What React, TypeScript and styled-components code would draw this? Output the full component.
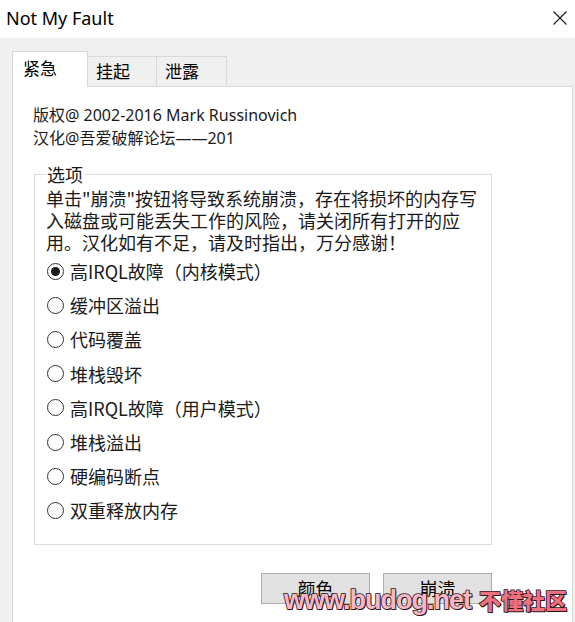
import React, { useState } from "react";
import styled, { createGlobalStyle } from "styled-components";

const GlobalStyle = createGlobalStyle`
  html, body {
    margin: 0;
    padding: 0;
    background: #f0f0f0;
  }
  * { box-sizing: border-box; }
`;

const UI_FONT = `"Noto Sans", "Noto Sans CJK SC", sans-serif`;
const CJK_FONT = `"Noto Sans CJK SC", "Noto Sans", sans-serif`;

const Window = styled.div`
  position: relative;
  width: 575px;
  height: 622px;
  display: flex;
  flex-direction: column;
  overflow: hidden;
  color: #1a1a1a;
  font-family: ${CJK_FONT};
`;

const TitleBar = styled.div`
  height: 38px;
  background: #ffffff;
  display: flex;
  align-items: center;
  justify-content: space-between;
  padding: 0 4px 2px 6px;
`;

const Title = styled.span`
  font-family: ${UI_FONT};
  font-size: 18px;
  color: #000;
`;

const CloseBtn = styled.button`
  border: none;
  background: transparent;
  width: 22px;
  height: 22px;
  padding: 0;
  display: flex;
  align-items: center;
  justify-content: center;
`;

const Body = styled.div`
  flex: 1;
  background: #f0f0f0;
  padding: 14px 2px 0 12px;
  display: flex;
  flex-direction: column;
`;

const TabStrip = styled.div`
  display: flex;
  align-items: flex-end;
  height: 35px;
  position: relative;
  z-index: 1;
  margin-bottom: -1px;
`;

const Tab = styled.div<{ $active?: boolean; $width: number }>`
  width: ${({ $width }) => $width}px;
  height: ${({ $active }) => ($active ? "36px" : "31px")};
  background: ${({ $active }) => ($active ? "#ffffff" : "#f0f0f0")};
  border: 1px solid #d9d9d9;
  border-bottom: ${({ $active }) => ($active ? "none" : "1px solid #d9d9d9")};
  margin-left: ${({ $active }) => ($active ? "0" : "-1px")};
  font-size: 17px;
  padding-left: ${({ $active }) => ($active ? "10px" : "8px")};
  padding-top: ${({ $active }) => ($active ? "3px" : "1px")};
  line-height: 26px;
  color: #000;
  cursor: default;
`;

const Panel = styled.div`
  flex: 1;
  background: #ffffff;
  border: 1px solid #d9d9d9;
  border-bottom: none;
  padding: 17px 0 0 20px;
`;

const Header = styled.div`
  font-family: ${UI_FONT};
  font-size: 16px;
  line-height: 23px;
  color: #1a1a1a;
`;

const GroupBox = styled.fieldset`
  margin: 13px 0 0 1px;
  width: 458px;
  min-width: 0;
  border: 1px solid #dcdcdc;
  padding: 0 11px 16px 11px;
`;

const Legend = styled.legend`
  font-size: 18px;
  line-height: 22px;
  padding: 0 1px;
  margin-left: 0;
`;

const Description = styled.p`
  margin: 2px 0 0 0;
  font-size: 18px;
  line-height: 22px;
  white-space: nowrap;
`;

const RadioList = styled.div`
  display: flex;
  flex-direction: column;
  padding-top: 1px;
`;

const RadioRow = styled.label`
  height: 34.2px;
  display: flex;
  align-items: center;
  gap: 6px;
  font-size: 18px;
  cursor: default;
`;

const RadioCircle = styled.span<{ $checked: boolean }>`
  width: 17px;
  height: 17px;
  margin-left: 1px;
  border-radius: 50%;
  border: 1px solid #333333;
  background: #ffffff;
  display: flex;
  align-items: center;
  justify-content: center;
  &::after {
    content: "";
    width: 9px;
    height: 9px;
    border-radius: 50%;
    background: ${({ $checked }) => ($checked ? "#1a1a1a" : "transparent")};
  }
`;

const ButtonRow = styled.div`
  width: 459px;
  margin-top: 28px;
  display: flex;
  justify-content: flex-end;
  gap: 13px;
`;

const Button = styled.button`
  width: 109px;
  height: 31px;
  background: #e1e1e1;
  border: 1px solid #adadad;
  font-family: ${CJK_FONT};
  font-size: 18px;
  color: #000;
  padding: 0;
`;

const Watermark = styled.div`
  position: absolute;
  right: 8px;
  bottom: 6px;
  display: flex;
  align-items: baseline;
  gap: 8px;
  pointer-events: none;
  -webkit-text-stroke: 1.5px #2a1418;
  paint-order: stroke fill;
  text-shadow: 1px 1px 0 #2a1418;
`;

const WatermarkUrl = styled.span`
  font-family: "Liberation Sans Narrow", "Liberation Sans", sans-serif;
  font-weight: 700;
  font-size: 27px;
  letter-spacing: -1px;
  color: #f7b7c7;
`;

const WatermarkName = styled.span`
  font-family: ${CJK_FONT};
  font-weight: 900;
  font-size: 22px;
  color: #f0707e;
`;

const options = [
  "高IRQL故障（内核模式）",
  "缓冲区溢出",
  "代码覆盖",
  "堆栈毁坏",
  "高IRQL故障（用户模式）",
  "堆栈溢出",
  "硬编码断点",
  "双重释放内存",
];

const descriptionLines = [
  "单击\"崩溃\"按钮将导致系统崩溃，存在将损坏的内存写",
  "入磁盘或可能丢失工作的风险，请关闭所有打开的应",
  "用。汉化如有不足，请及时指出，万分感谢！",
];

const tabs = [
  { label: "紧急", width: 76 },
  { label: "挂起", width: 70 },
  { label: "泄露", width: 71 },
];

export default function App() {
  const [selected, setSelected] = useState(0);
  return (
    <>
      <GlobalStyle />
      <Window>
        <TitleBar>
          <Title>Not My Fault</Title>
          <CloseBtn aria-label="close">
            <svg width="16" height="16" viewBox="0 0 16 16">
              <path d="M1.5 1.5 L14.5 14.5 M14.5 1.5 L1.5 14.5" stroke="#1a1a1a" strokeWidth="1.1" />
            </svg>
          </CloseBtn>
        </TitleBar>
        <Body>
          <TabStrip>
            {tabs.map((t, i) => (
              <Tab key={t.label} $active={i === 0} $width={t.width}>
                {t.label}
              </Tab>
            ))}
          </TabStrip>
          <Panel>
            <Header>
              版权@ 2002-2016 Mark Russinovich
              <br />
              汉化@吾爱破解论坛——201
            </Header>
            <GroupBox>
              <Legend>选项</Legend>
              <Description>
                {descriptionLines.map((line, i) => (
                  <React.Fragment key={i}>
                    {line}
                    {i < descriptionLines.length - 1 && <br />}
                  </React.Fragment>
                ))}
              </Description>
              <RadioList>
                {options.map((o, i) => (
                  <RadioRow key={o} onClick={() => setSelected(i)}>
                    <RadioCircle $checked={selected === i} />
                    {o}
                  </RadioRow>
                ))}
              </RadioList>
            </GroupBox>
            <ButtonRow>
              <Button>颜色</Button>
              <Button>崩溃</Button>
            </ButtonRow>
          </Panel>
        </Body>
        <Watermark>
          <WatermarkUrl>www.budog.net</WatermarkUrl>
          <WatermarkName>不懂社区</WatermarkName>
        </Watermark>
      </Window>
    </>
  );
}
